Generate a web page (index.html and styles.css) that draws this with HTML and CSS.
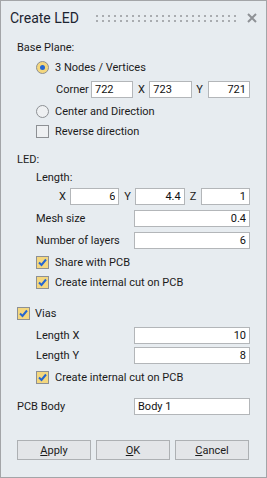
FILE: index.html
```html
<!DOCTYPE html>
<html lang="en">
    <head>
        <meta charset="UTF-8" />
        <meta name="viewport" content="width=device-width, initial-scale=1.0" />
        <title>Create LED</title>
        <link rel="stylesheet" href="styles.css">
    </head>
    <body>
        <div class="dialog">
            <div class="titlebar">
                <span class="title">Create LED</span>
                <span class="grip"></span>
                <svg class="close" width="10" height="10" viewBox="0 0 10 10">
                    <path d="M1 1 L9 9 M9 1 L1 9" />
                </svg>
            </div>

            <div class="content">
                <div class="row">Base Plane:</div>
                <div class="row flush indent">
                    <span class="radio checked"></span>
                    <span>3 Nodes / Vertices</span>
                </div>
                <div class="row coords">
                    <span class="coord-label">Corner</span>
                    <input type="text" value="722" />
                    <span class="axis">X</span>
                    <input type="text" value="723" />
                    <span class="axis">Y</span>
                    <input type="text" class="num" value="721" />
                </div>
                <div class="row indent">
                    <span class="radio"></span>
                    <span>Center and Direction</span>
                </div>
                <div class="row flush indent">
                    <span class="check"></span>
                    <span>Reverse direction</span>
                </div>

                <div class="row section short">LED:</div>
                <div class="row flush short indent">Length:</div>
                <div class="row flush xyz">
                    <span class="axis">X</span>
                    <input type="text" class="num" value="6" />
                    <span class="axis">Y</span>
                    <input type="text" class="num" value="4.4" />
                    <span class="axis">Z</span>
                    <input type="text" class="num" value="1" />
                </div>
                <div class="row field indent">
                    <span>Mesh size</span>
                    <input type="text" class="num" value="0.4" />
                </div>
                <div class="row field indent">
                    <span>Number of layers</span>
                    <input type="text" class="num" value="6" />
                </div>
                <div class="row indent">
                    <span class="check checked">
                        <svg width="11" height="11" viewBox="0 0 11 11"><path d="M2 5.5 L4.5 8 L9 2.5" /></svg>
                    </span>
                    <span>Share with PCB</span>
                </div>
                <div class="row flush indent">
                    <span class="check checked">
                        <svg width="11" height="11" viewBox="0 0 11 11"><path d="M2 5.5 L4.5 8 L9 2.5" /></svg>
                    </span>
                    <span>Create internal cut on PCB</span>
                </div>

                <div class="row section-lg vias">
                    <span class="check checked">
                        <svg width="11" height="11" viewBox="0 0 11 11"><path d="M2 5.5 L4.5 8 L9 2.5" /></svg>
                    </span>
                    <span>Vias</span>
                </div>
                <div class="row field indent">
                    <span>Length X</span>
                    <input type="text" class="num" value="10" />
                </div>
                <div class="row flush field indent">
                    <span>Length Y</span>
                    <input type="text" class="num" value="8" />
                </div>
                <div class="row indent">
                    <span class="check checked">
                        <svg width="11" height="11" viewBox="0 0 11 11"><path d="M2 5.5 L4.5 8 L9 2.5" /></svg>
                    </span>
                    <span>Create internal cut on PCB</span>
                </div>

                <div class="row section field pcb">
                    <span>PCB Body</span>
                    <input type="text" value="Body 1" />
                </div>

                <div class="actions">
                    <button><u>A</u>pply</button>
                    <button><u>O</u>K</button>
                    <button><u>C</u>ancel</button>
                </div>
            </div>
        </div>
    </body>
</html>
```

FILE: styles.css
```css
body {
    margin: 0;
    font-family: Roboto, "Liberation Sans", sans-serif;
    font-size: 11px;
    color: #1b1b1b;
}
.dialog {
    box-sizing: border-box;
    width: 267px;
    height: 478px;
    background: #e7ecf0;
    border: 1px solid #a3a5a8;
}
.titlebar {
    display: flex;
    align-items: center;
    height: 34px;
    padding: 0 9px;
}
.title {
    font-size: 14px;
    color: #1c2430;
}
.grip {
    flex: 1;
    height: 7px;
    margin: 0 10px 0 13px;
    background-image:
        linear-gradient(90deg, #e7ecf0 4px, transparent 4px),
        linear-gradient(#a9acb0 2px, transparent 2px);
    background-size: 6px 5px;
}
.close path {
    stroke: #8e9196;
    stroke-width: 2;
    fill: none;
}
.content {
    padding: 2px 16px 0 16px;
}
.row {
    display: flex;
    align-items: center;
    height: 20px;
    margin-top: 2px;
}
.row:first-child,
.row.flush {
    margin-top: 0;
}
.row.short {
    height: 18px;
}
.row.section {
    margin-top: 9px;
}
.row.section-lg {
    margin-top: 11px;
}
.indent {
    padding-left: 19px;
}
input {
    box-sizing: border-box;
    height: 17px;
    padding: 0 3px;
    border: 1px solid #b3b6b9;
    background: #fff;
    font-family: inherit;
    font-size: 11px;
    color: #111;
    outline: none;
}
input.num {
    text-align: right;
}
.coords {
    padding-left: 39px;
}
.coord-label {
    width: 35px;
}
.coords input,
.xyz input {
    flex: 1;
    min-width: 0;
}
.coords .axis {
    width: 16px;
    text-align: center;
}
.xyz {
    padding-left: 42px;
}
.xyz .axis {
    width: 11px;
}
.xyz input + .axis {
    margin-left: 5px;
}
.field span {
    flex: 1;
}
.field input {
    width: 116px;
}
.radio,
.check {
    box-sizing: border-box;
    flex: none;
    display: flex;
    align-items: center;
    justify-content: center;
    width: 13px;
    height: 13px;
    margin-right: 6px;
    border: 1px solid #8d9094;
    background: #eef0f2;
}
.radio {
    border-radius: 50%;
}
.radio.checked,
.check.checked {
    background: #f4d77e;
}
.radio.checked::after {
    content: "";
    width: 5px;
    height: 5px;
    border-radius: 50%;
    background: #2566d0;
}
.check path {
    fill: none;
    stroke: #2566d0;
    stroke-width: 2;
}
.vias .check {
    margin-right: 5px;
}
.actions {
    display: flex;
    gap: 5px;
    margin-top: 24px;
}
button {
    width: 74px;
    height: 20px;
    padding: 0;
    border: 1px solid #adb0b3;
    background: #e3e5e8;
    font-family: inherit;
    font-size: 11px;
    color: #1b1b1b;
}
```
